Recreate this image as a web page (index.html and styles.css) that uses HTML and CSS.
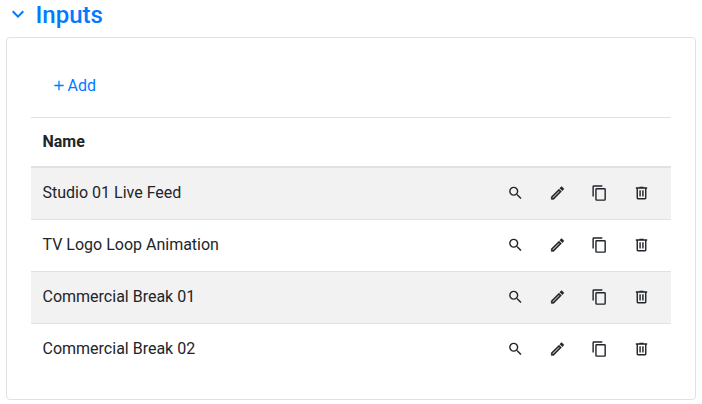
FILE: index.html
```html
<!DOCTYPE html>
<html lang="en">
<head>
  <meta charset="utf-8">
  <title>Inputs</title>
  <link rel="stylesheet" href="styles.css">
</head>
<body>
  <svg class="sprite">
    <symbol id="magnify" viewBox="0 0 24 24"><path d="M9.5,3A6.5,6.5 0 0,1 16,9.5C16,11.11 15.41,12.59 14.44,13.73L14.71,14H15.5L20.5,19L19,20.5L14,15.5V14.71L13.73,14.44C12.59,15.41 11.11,16 9.5,16A6.5,6.5 0 0,1 3,9.5A6.5,6.5 0 0,1 9.5,3M9.5,5C7,5 5,7 5,9.5C5,12 7,14 9.5,14C12,14 14,12 14,9.5C14,7 12,5 9.5,5Z"/></symbol>
    <symbol id="pencil" viewBox="0 0 24 24"><path d="M14.06,9L15,9.94L5.92,19H5V18.08L14.06,9M17.66,3C17.41,3 17.15,3.1 16.96,3.29L15.13,5.12L18.88,8.87L20.71,7.04C21.1,6.65 21.1,6 20.71,5.63L18.37,3.29C18.17,3.09 17.92,3 17.66,3M14.06,6.19L3,17.25V21H6.75L17.81,9.94L14.06,6.19Z"/></symbol>
    <symbol id="copy" viewBox="0 0 24 24"><path d="M19,21H8V7H19M19,5H8A2,2 0 0,0 6,7V21A2,2 0 0,0 8,23H19A2,2 0 0,0 21,21V7A2,2 0 0,0 19,5M16,1H4A2,2 0 0,0 2,3V17H4V3H16V1Z"/></symbol>
    <symbol id="trash" viewBox="0 0 24 24"><path d="M9,3V4H4V6H5V19A2,2 0 0,0 7,21H17A2,2 0 0,0 19,19V6H20V4H15V3H9M7,6H17V19H7V6M9,8V17H11V8H9M13,8V17H15V8H13Z"/></symbol>
  </svg>

  <h4 class="title">
    <svg class="chevron" viewBox="0 0 24 24"><path d="M7.41,8.58L12,13.17L16.59,8.58L18,10L12,16L6,10L7.41,8.58Z"/></svg>
    <span>Inputs</span>
  </h4>

  <div class="card">
    <a class="add">
      <svg class="plus" viewBox="0 0 24 24"><path d="M19,13H13V19H11V13H5V11H11V5H13V11H19V13Z"/></svg>
      <span>Add</span>
    </a>
    <div class="table">
      <div class="head">Name</div>
      <div class="row">
        <span class="name">Studio 01 Live Feed</span>
        <svg class="icon"><use href="#magnify"/></svg>
        <svg class="icon edit"><use href="#pencil"/></svg>
        <svg class="icon"><use href="#copy"/></svg>
        <svg class="icon"><use href="#trash"/></svg>
      </div>
      <div class="row">
        <span class="name">TV Logo Loop Animation</span>
        <svg class="icon"><use href="#magnify"/></svg>
        <svg class="icon edit"><use href="#pencil"/></svg>
        <svg class="icon"><use href="#copy"/></svg>
        <svg class="icon"><use href="#trash"/></svg>
      </div>
      <div class="row">
        <span class="name">Commercial Break 01</span>
        <svg class="icon"><use href="#magnify"/></svg>
        <svg class="icon edit"><use href="#pencil"/></svg>
        <svg class="icon"><use href="#copy"/></svg>
        <svg class="icon"><use href="#trash"/></svg>
      </div>
      <div class="row">
        <span class="name">Commercial Break 02</span>
        <svg class="icon"><use href="#magnify"/></svg>
        <svg class="icon edit"><use href="#pencil"/></svg>
        <svg class="icon"><use href="#copy"/></svg>
        <svg class="icon"><use href="#trash"/></svg>
      </div>
    </div>
  </div>
</body>
</html>
```
FILE: styles.css
```css
* { box-sizing: border-box; }
body { margin: 0; padding: 0 6px; font-family: Roboto, sans-serif; font-size: 16px; line-height: 24px; color: #212529; background-color: #fff; }
svg { fill: currentColor; flex: none; }
.sprite { display: none; }
.title { display: flex; align-items: flex-start; height: 37px; margin: 0; padding-top: 1px; font-size: 24px; font-weight: 500; line-height: 29px; color: #007bff; }
.chevron { width: 24px; height: 24px; margin: 1px 6px 0 -0.5px; }
.card { height: 363px; padding: 36px 24px 0; border: 1px solid #dee2e6; border-radius: 4px; }
.add { display: flex; align-items: center; height: 24px; padding-left: 20px; color: #007bff; }
.plus { width: 16px; height: 17px; margin: 0 0.5px 1px 0; }
.table { margin-top: 19px; }
.head { height: 51px; padding: 12px 11.5px; border-top: 1px solid #dee2e6; border-bottom: 2px solid #dee2e6; font-weight: 700; line-height: 24px; }
.row { display: flex; align-items: center; gap: 25px; height: 52px; padding: 0 21px 2px 11.5px; border-bottom: 1px solid #dee2e6; }
.row:nth-child(even) { background-color: #f2f2f2; }
.row:last-child { border-bottom: none; padding-bottom: 3px; }
.name { flex: 1; }
.icon { width: 17px; height: 18px; margin-top: 1px; }
.edit { stroke: currentColor; stroke-width: 0.4px; }
```
